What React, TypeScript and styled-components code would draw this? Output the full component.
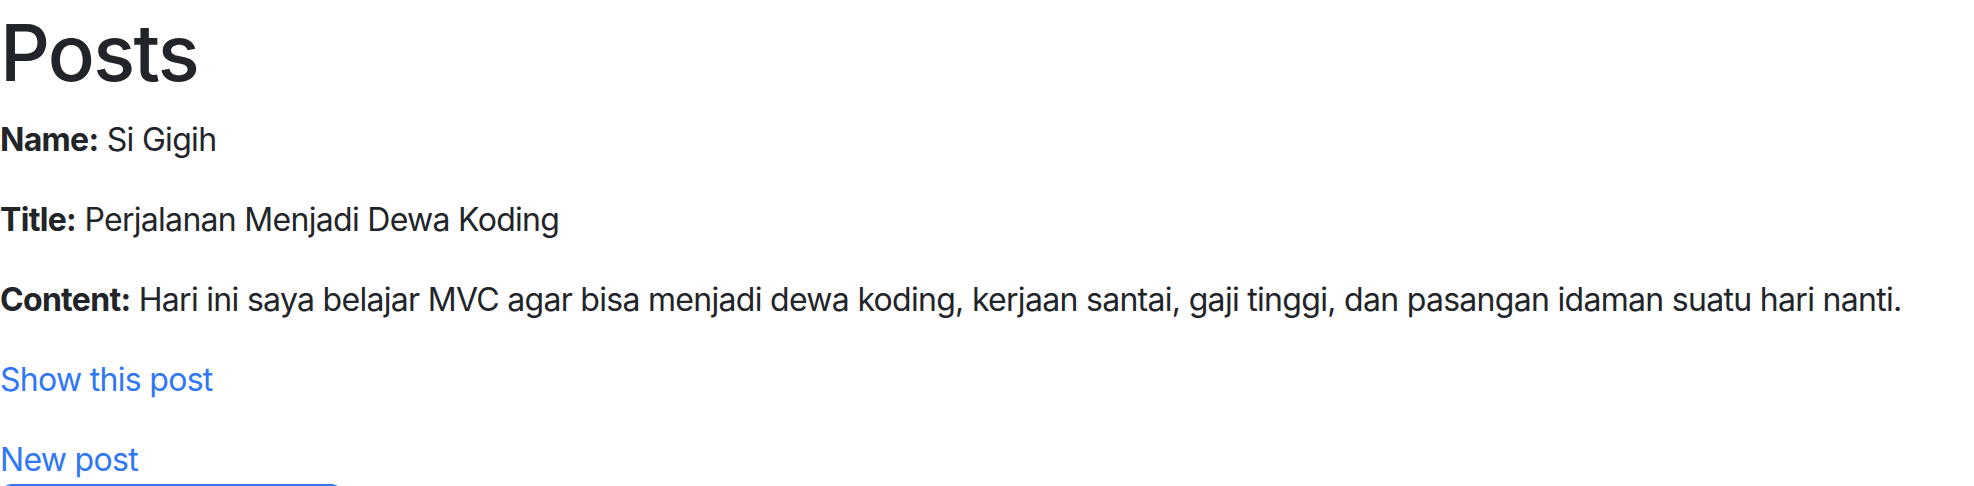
import styled, { createGlobalStyle } from "styled-components";

const GlobalStyle = createGlobalStyle`
  html, body {
    margin: 0;
    padding: 0;
    background: #ffffff;
  }
  body {
    font-family: Inter, "Noto Sans", "Liberation Sans", sans-serif;
    font-size: 32px;
    line-height: 1.5;
    letter-spacing: -0.7px;
    color: #212529;
  }
`;

type postType = {
  id: number;
  name: string;
  title: string;
  content: string;
};

const posts: postType[] = [
  {
    id: 1,
    name: "Si Gigih",
    title: "Perjalanan Menjadi Dewa Koding",
    content:
      "Hari ini saya belajar MVC agar bisa menjadi dewa koding, kerjaan santai, gaji tinggi, dan pasangan idaman suatu hari nanti.",
  },
];

function App() {
  return (
    <>
      <GlobalStyle />
      <StyledPage>
        <h1 className="page-title">Posts</h1>

        <div className="posts">
          {posts.map((post) => (
            <div key={post.id} className="post">
              <p className="post-field">
                <strong>Name:</strong> {post.name}
              </p>
              <p className="post-field">
                <strong>Title:</strong> {post.title}
              </p>
              <p className="post-field">
                <strong>Content:</strong> {post.content}
              </p>
              <p className="post-field">
                <Link href="#">Show this post</Link>
              </p>
            </div>
          ))}
        </div>

        <Link href="#">New post</Link>
        <PrimaryButton type="button" aria-label="Action" />
      </StyledPage>
    </>
  );
}

export default App;

const StyledPage = styled.main`
  padding-top: 6px;

  .page-title {
    margin: 0 0 16px;
    font-size: 78px;
    font-weight: 500;
    line-height: 1.2;
    letter-spacing: -1.7px;
  }

  .post-field {
    margin: 0 0 32px;

    strong {
      font-weight: 700;
    }
  }
`;

const Link = styled.a`
  color: #2f77f6;
  text-decoration: none;
`;

const PrimaryButton = styled.button`
  display: block;
  width: 343px;
  height: 76px;
  padding: 0;
  border: none;
  border-radius: 12px;
  background-color: #2f77f6;
  cursor: pointer;
`;
